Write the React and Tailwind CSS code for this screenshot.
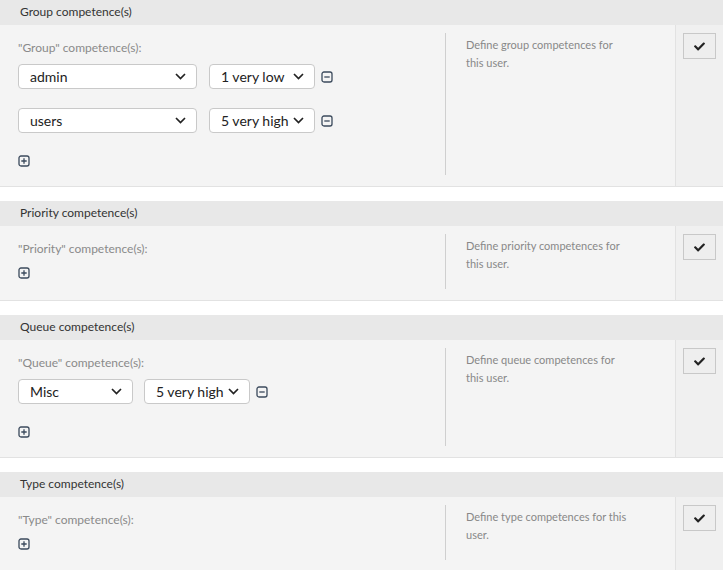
import React from "react";
import { FaCheck } from "react-icons/fa";

const font = { fontFamily: "Lato, 'Open Sans', sans-serif" };

function Chevron() {
  return (
    <svg width="11" height="7" viewBox="0 0 11 7" className="shrink-0">
      <path d="M1 1 L5.5 5.5 L10 1" fill="none" stroke="#222" strokeWidth="1.7" />
    </svg>
  );
}

function Select({ value, w }) {
  return (
    <div
      className={`flex h-[25px] items-center justify-between rounded-[4px] border border-[#c9c9c9] bg-white pl-[11px] pr-[10px] text-[14px] text-[#222] ${w}`}
    >
      <span className="leading-none">{value}</span>
      <Chevron />
    </div>
  );
}

function MinusIcon() {
  return (
    <svg width="12" height="12" viewBox="0 0 12 12" className="ml-[6px] shrink-0">
      <rect x="1" y="1" width="10" height="10" rx="2" fill="none" stroke="#3b4a5c" strokeWidth="1.3" />
      <path d="M3.3 6 H8.7" stroke="#3b4a5c" strokeWidth="1.3" />
    </svg>
  );
}

function PlusIcon() {
  return (
    <svg width="12" height="12" viewBox="0 0 12 12" className="shrink-0">
      <rect x="1" y="1" width="10" height="10" rx="2" fill="none" stroke="#3b4a5c" strokeWidth="1.3" />
      <path d="M3.3 6 H8.7 M6 3.3 V8.7" stroke="#3b4a5c" strokeWidth="1.3" />
    </svg>
  );
}

function Section({ title, label, desc, rows, nameW, last }) {
  return (
    <div className={last ? "" : "mb-[14px]"}>
      <div className="h-[25px] bg-[#e8e8e8] pl-[20px] text-[12px] leading-[24px] text-[#333]">
        {title}
      </div>
      <div className="flex border-b border-[#e2e2e2] bg-[#f4f4f4]">
        <div className="flex flex-1 pt-[8px] pb-[11px]">
          <div className="w-[445px] pl-[18px]">
            <div className="mt-[6px] text-[12px] leading-[18px] text-[#8a8a8a]">{label}</div>
            {rows.length > 0 ? (
              <>
                {rows.map((r, i) => (
                  <div key={i} className={`flex items-center ${i === 0 ? "mt-[7px]" : "mt-[19px]"}`}>
                    <Select value={r[0]} w={nameW} />
                    <div className={nameW === "w-[115px]" ? "ml-[11px]" : "ml-[12px]"}>
                      <Select value={r[1]} w="w-[106px]" />
                    </div>
                    <MinusIcon />
                  </div>
                ))}
                <div className="mt-[22px] mb-[8px]">
                  <PlusIcon />
                </div>
              </>
            ) : (
              <div className="mt-[9px] mb-[10px]">
                <PlusIcon />
              </div>
            )}
          </div>
          <div className="w-[230px] border-l border-[#cfcfcf] pl-[20px] pt-[3px] text-[11px] leading-[18px] text-[#888]">
            <div className="w-[165px]">{desc}</div>
          </div>
        </div>
        <div className="w-[48px] border-l border-[#e2e2e2] bg-[#f0f0f0] pl-[7px] pt-[8px]">
          <div className="flex h-[26px] w-[33px] items-center justify-center border border-[#c8c8c8] bg-[#eeeeee]">
            <FaCheck className="text-[11px] text-[#222]" />
          </div>
        </div>
      </div>
    </div>
  );
}

export default function App() {
  return (
    <div className="h-[570px] w-[725px] overflow-hidden bg-white" style={font}>
      <div className="w-[723px]">
        <Section
          title="Group competence(s)"
          label={'"Group" competence(s):'}
          desc="Define group competences for this user."
          rows={[
            ["admin", "1 very low"],
            ["users", "5 very high"],
          ]}
          nameW="w-[179px]"
        />
        <Section
          title="Priority competence(s)"
          label={'"Priority" competence(s):'}
          desc="Define priority competences for this user."
          rows={[]}
        />
        <Section
          title="Queue competence(s)"
          label={'"Queue" competence(s):'}
          desc="Define queue competences for this user."
          rows={[["Misc", "5 very high"]]}
          nameW="w-[115px]"
        />
        <Section
          title="Type competence(s)"
          label={'"Type" competence(s):'}
          desc="Define type competences for this user."
          rows={[]}
          last
        />
      </div>
    </div>
  );
}
